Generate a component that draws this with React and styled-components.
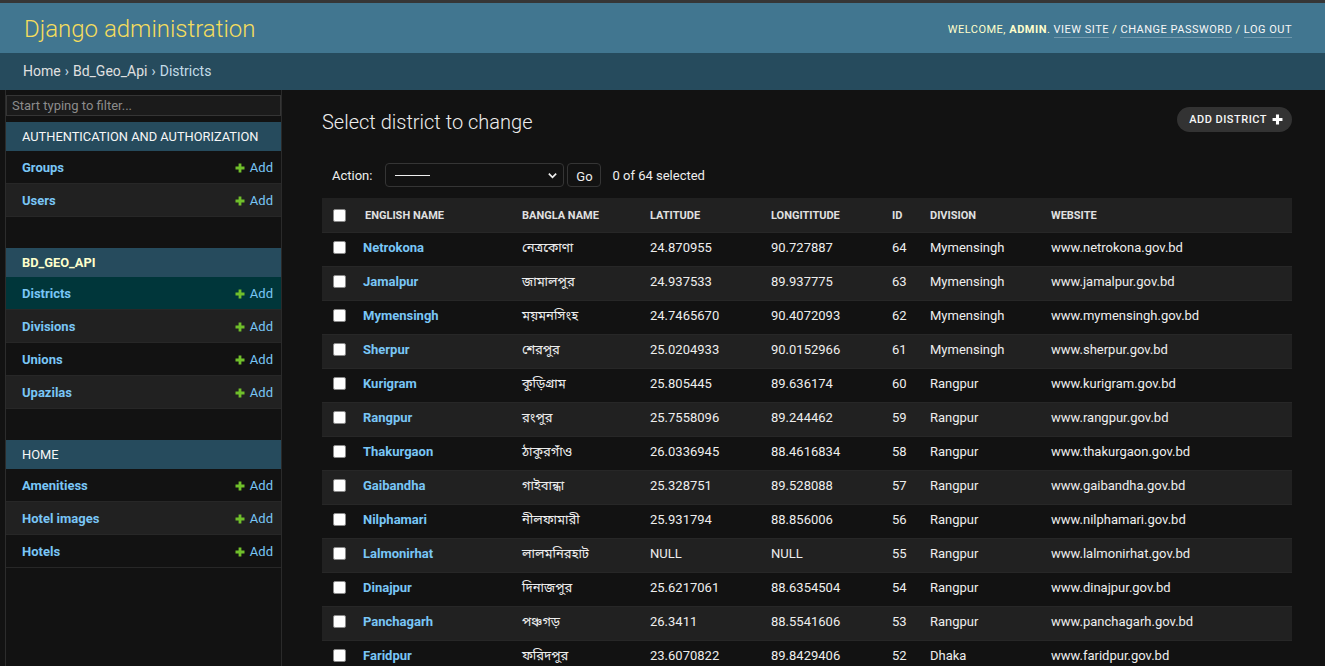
import styled, { createGlobalStyle } from "styled-components";

const GlobalStyle = createGlobalStyle`
  html, body {
    margin: 0;
    padding: 0;
    background: #121212;
    overflow: hidden;
  }
  body {
    font-family: Roboto, "Liberation Sans", "DejaVu Sans", sans-serif;
    color: #eeeeee;
    font-size: 14px;
  }
  * {
    box-sizing: border-box;
  }
`;

const bengali = `Roboto, "Noto Sans Bengali", "Noto Serif Bengali", "Lohit Bengali", "Vrinda", "FreeSerif", serif`;

const Page = styled.div`
  height: 100vh;
  display: flex;
  flex-direction: column;
  border-top: 3px solid #363636;
  overflow: hidden;
`;

const Header = styled.header`
  height: 50px;
  flex: 0 0 50px;
  background: #417690;
  display: flex;
  align-items: center;
  justify-content: space-between;
  padding: 1px 33px 0 24px;
`;

const Branding = styled.h1`
  margin: 0;
  font-size: 24px;
  font-weight: 300;
  color: #f5dd5d;
  line-height: 24px;
`;

const UserTools = styled.div`
  font-size: 11px;
  letter-spacing: 0.5px;
  text-transform: uppercase;
  color: #ffffcc;
  padding-top: 1px;

  strong {
    font-weight: 700;
  }
`;

const ToolLink = styled.a`
  color: #f7f7f7;
  text-decoration: none;
  border-bottom: 1px solid rgba(255, 255, 255, 0.25);
  padding-bottom: 1px;
`;

const Breadcrumbs = styled.nav`
  height: 37px;
  flex: 0 0 37px;
  background: #264b5d;
  color: #c4dce8;
  font-size: 14px;
  display: flex;
  align-items: center;
  padding: 0 24px 1px 23px;
  gap: 4px;

  a {
    color: #e0e0e0;
    text-decoration: none;
  }
`;

const Main = styled.div`
  flex: 1;
  min-height: 0;
  display: flex;
`;

const ToggleColumn = styled.div`
  flex: 0 0 6px;
  border-right: 1px solid #2c2c2c;
  background: #121212;
`;

const Sidebar = styled.aside`
  flex: 0 0 276px;
  border-right: 1px solid #2a2a2a;
  display: flex;
  flex-direction: column;
`;

const Filter = styled.input`
  margin: 5px 0 6px;
  height: 21px;
  width: 100%;
  padding: 2px 5px;
  border: 1px solid #353535;
  background: #1b1b1b;
  color: #eeeeee;
  font-family: inherit;
  font-size: 13px;

  &::placeholder {
    color: #8c8c8c;
  }
`;

const AppModule = styled.div`
  margin-bottom: 31px;
`;

const Caption = styled.div`
  height: 29px;
  background: #264b5d;
  color: ${(p) => (p.$current ? "#ffffcc" : "#f7f7f7")};
  font-weight: ${(p) => (p.$current ? 700 : 400)};
  font-size: 12.85px;
  text-transform: uppercase;
  display: flex;
  align-items: center;
  padding-left: 16px;
`;

const ModelRow = styled.div`
  height: 33px;
  display: flex;
  align-items: center;
  justify-content: space-between;
  padding: 1px 8px 0 16px;
  border-bottom: 1px solid #272727;
  background: ${(p) => (p.$selected ? "#00363a" : p.$even ? "#212121" : "#121212")};
`;

const ModelLink = styled.a`
  color: #79c6f6;
  font-weight: 700;
  font-size: 13px;
  text-decoration: none;
`;

const AddLink = styled.a`
  display: flex;
  align-items: center;
  gap: 5px;
  color: #79c6f6;
  font-size: 13px;
  text-decoration: none;
`;

const Content = styled.main`
  flex: 1;
  min-width: 0;
  padding: 0 33px 0 40px;
`;

const TopRow = styled.div`
  display: flex;
  justify-content: space-between;
  align-items: flex-start;
  padding-top: 17px;
`;

const Title = styled.h1`
  margin: 3px 0 0;
  font-size: 20px;
  font-weight: 300;
  line-height: 24px;
  color: #eeeeee;
`;

const ObjectTool = styled.a`
  height: 25px;
  display: flex;
  align-items: center;
  gap: 5px;
  padding: 0 9px 0 12px;
  border-radius: 15px;
  background: #333333;
  color: #f7f7f7;
  font-size: 11px;
  font-weight: 500;
  letter-spacing: 0.5px;
  text-transform: uppercase;
  text-decoration: none;
`;

const Actions = styled.div`
  margin-top: 22px;
  padding: 7px 10px 11px;
  display: flex;
  align-items: center;
  font-size: 13px;
  color: #eeeeee;
`;

const ActionLabel = styled.span`
  margin-right: 13px;
`;

const SelectBox = styled.div`
  width: 179px;
  height: 24px;
  border: 1px solid #353535;
  border-radius: 4px;
  background: #121212;
  display: flex;
  align-items: center;
  justify-content: space-between;
  padding: 0 5px 0 9px;
`;

const Dashes = styled.span`
  width: 35px;
  border-top: 1px solid #eeeeee;
`;

const GoButton = styled.button`
  margin-left: 3px;
  height: 24px;
  width: 34px;
  border: 1px solid #353535;
  border-radius: 4px;
  background: #121212;
  color: #eeeeee;
  font-family: inherit;
  font-size: 13px;
  padding: 2px 0 0;
`;

const Counter = styled.span`
  margin-left: 11px;
`;

const Table = styled.table`
  width: 100%;
  border-collapse: collapse;
  table-layout: fixed;
  font-size: 13px;
`;

const HeadCell = styled.th`
  width: ${(p) => p.$w}px;
  background: #212121;
  height: 34px;
  padding: 1px 0 0 ${(p) => p.$pad ?? 8}px;
  text-align: left;
  font-size: 11px;
  font-weight: 700;
  color: #e0e0e0;
  text-transform: uppercase;
  border-bottom: 1px solid #272727;
  vertical-align: middle;
`;

const Row = styled.tr`
  background: ${(p) => (p.$even ? "#212121" : "#121212")};
`;

const Cell = styled.td`
  padding: 7px 8px 10px;
  line-height: 16px;
  border-bottom: 1px solid #272727;
  color: #eeeeee;
  white-space: nowrap;
  overflow: hidden;
  font-family: ${(p) => (p.$bn ? bengali : "inherit")};
  vertical-align: top;
`;

const NameLink = styled.a`
  color: #79c6f6;
  font-weight: 700;
  text-decoration: none;
`;

const Check = styled.span`
  display: block;
  width: 13px;
  height: 13px;
  margin: ${(p) => (p.$head ? "0 0 0 11px" : "1px 0 0 3px")};
  background: #ffffff;
  border: 1px solid #8a8a8a;
  border-radius: 2px;
`;

const PlusIcon = ({ color, size = 10 }) => (
  <svg width={size} height={size} viewBox="0 0 10 10">
    <path d="M3.6 0.5h2.8v3.1h3.1v2.8H6.4v3.1H3.6V6.4H0.5V3.6h3.1z" fill={color} />
  </svg>
);

const Chevron = () => (
  <svg width="11" height="11" viewBox="0 0 12 12">
    <path d="M2 4l4 4 4-4" stroke="#eeeeee" strokeWidth="1.8" fill="none" />
  </svg>
);

const apps = [
  { name: "Authentication and Authorization", models: ["Groups", "Users"] },
  { name: "Bd_Geo_Api", current: true, models: ["Districts", "Divisions", "Unions", "Upazilas"] },
  { name: "Home", models: ["Amenitiess", "Hotel images", "Hotels"] },
];

const districts = [
  ["Netrokona", "নেত্রকোণা", "24.870955", "90.727887", 64, "Mymensingh", "www.netrokona.gov.bd"],
  ["Jamalpur", "জামালপুর", "24.937533", "89.937775", 63, "Mymensingh", "www.jamalpur.gov.bd"],
  ["Mymensingh", "ময়মনসিংহ", "24.7465670", "90.4072093", 62, "Mymensingh", "www.mymensingh.gov.bd"],
  ["Sherpur", "শেরপুর", "25.0204933", "90.0152966", 61, "Mymensingh", "www.sherpur.gov.bd"],
  ["Kurigram", "কুড়িগ্রাম", "25.805445", "89.636174", 60, "Rangpur", "www.kurigram.gov.bd"],
  ["Rangpur", "রংপুর", "25.7558096", "89.244462", 59, "Rangpur", "www.rangpur.gov.bd"],
  ["Thakurgaon", "ঠাকুরগাঁও", "26.0336945", "88.4616834", 58, "Rangpur", "www.thakurgaon.gov.bd"],
  ["Gaibandha", "গাইবান্ধা", "25.328751", "89.528088", 57, "Rangpur", "www.gaibandha.gov.bd"],
  ["Nilphamari", "নীলফামারী", "25.931794", "88.856006", 56, "Rangpur", "www.nilphamari.gov.bd"],
  ["Lalmonirhat", "লালমনিরহাট", "NULL", "NULL", 55, "Rangpur", "www.lalmonirhat.gov.bd"],
  ["Dinajpur", "দিনাজপুর", "25.6217061", "88.6354504", 54, "Rangpur", "www.dinajpur.gov.bd"],
  ["Panchagarh", "পঞ্চগড়", "26.3411", "88.5541606", 53, "Rangpur", "www.panchagarh.gov.bd"],
  ["Faridpur", "ফরিদপুর", "23.6070822", "89.8429406", 52, "Dhaka", "www.faridpur.gov.bd"],
];

const columns = [
  { label: "English name", w: 159, pad: 10 },
  { label: "Bangla name", w: 128 },
  { label: "Latitude", w: 121 },
  { label: "Longititude", w: 121 },
  { label: "Id", w: 38 },
  { label: "Division", w: 121 },
  { label: "Website", w: 249 },
];

export default function App() {
  return (
    <>
      <GlobalStyle />
      <Page>
        <Header>
          <Branding>Django administration</Branding>
          <UserTools>
            Welcome, <strong>admin</strong>. <ToolLink>View site</ToolLink> /{" "}
            <ToolLink>Change password</ToolLink> / <ToolLink>Log out</ToolLink>
          </UserTools>
        </Header>
        <Breadcrumbs>
          <a>Home</a> › <a>Bd_Geo_Api</a> › <span>Districts</span>
        </Breadcrumbs>
        <Main>
          <ToggleColumn />
          <Sidebar>
            <Filter placeholder="Start typing to filter..." />
            {apps.map((app) => (
              <AppModule key={app.name}>
                <Caption $current={app.current}>{app.name}</Caption>
                {app.models.map((m, i) => (
                  <ModelRow key={m} $even={i % 2 === 1} $selected={m === "Districts"}>
                    <ModelLink>{m}</ModelLink>
                    <AddLink>
                      <PlusIcon color="#70bf2b" />
                      Add
                    </AddLink>
                  </ModelRow>
                ))}
              </AppModule>
            ))}
          </Sidebar>
          <Content>
            <TopRow>
              <Title>Select district to change</Title>
              <ObjectTool>
                Add district
                <PlusIcon color="#ffffff" size={11} />
              </ObjectTool>
            </TopRow>
            <Actions>
              <ActionLabel>Action:</ActionLabel>
              <SelectBox>
                <Dashes />
                <Chevron />
              </SelectBox>
              <GoButton>Go</GoButton>
              <Counter>0 of 64 selected</Counter>
            </Actions>
            <Table>
              <thead>
                <tr>
                  <HeadCell $w={33} $pad={0}>
                    <Check $head />
                  </HeadCell>
                  {columns.map((c) => (
                    <HeadCell key={c.label} $w={c.w} $pad={c.pad}>
                      {c.label}
                    </HeadCell>
                  ))}
                </tr>
              </thead>
              <tbody>
                {districts.map((d, i) => (
                  <Row key={d[0]} $even={i % 2 === 1}>
                    <Cell>
                      <Check />
                    </Cell>
                    <Cell>
                      <NameLink>{d[0]}</NameLink>
                    </Cell>
                    <Cell $bn>{d[1]}</Cell>
                    <Cell>{d[2]}</Cell>
                    <Cell>{d[3]}</Cell>
                    <Cell>{d[4]}</Cell>
                    <Cell>{d[5]}</Cell>
                    <Cell>{d[6]}</Cell>
                  </Row>
                ))}
              </tbody>
            </Table>
          </Content>
        </Main>
      </Page>
    </>
  );
}
